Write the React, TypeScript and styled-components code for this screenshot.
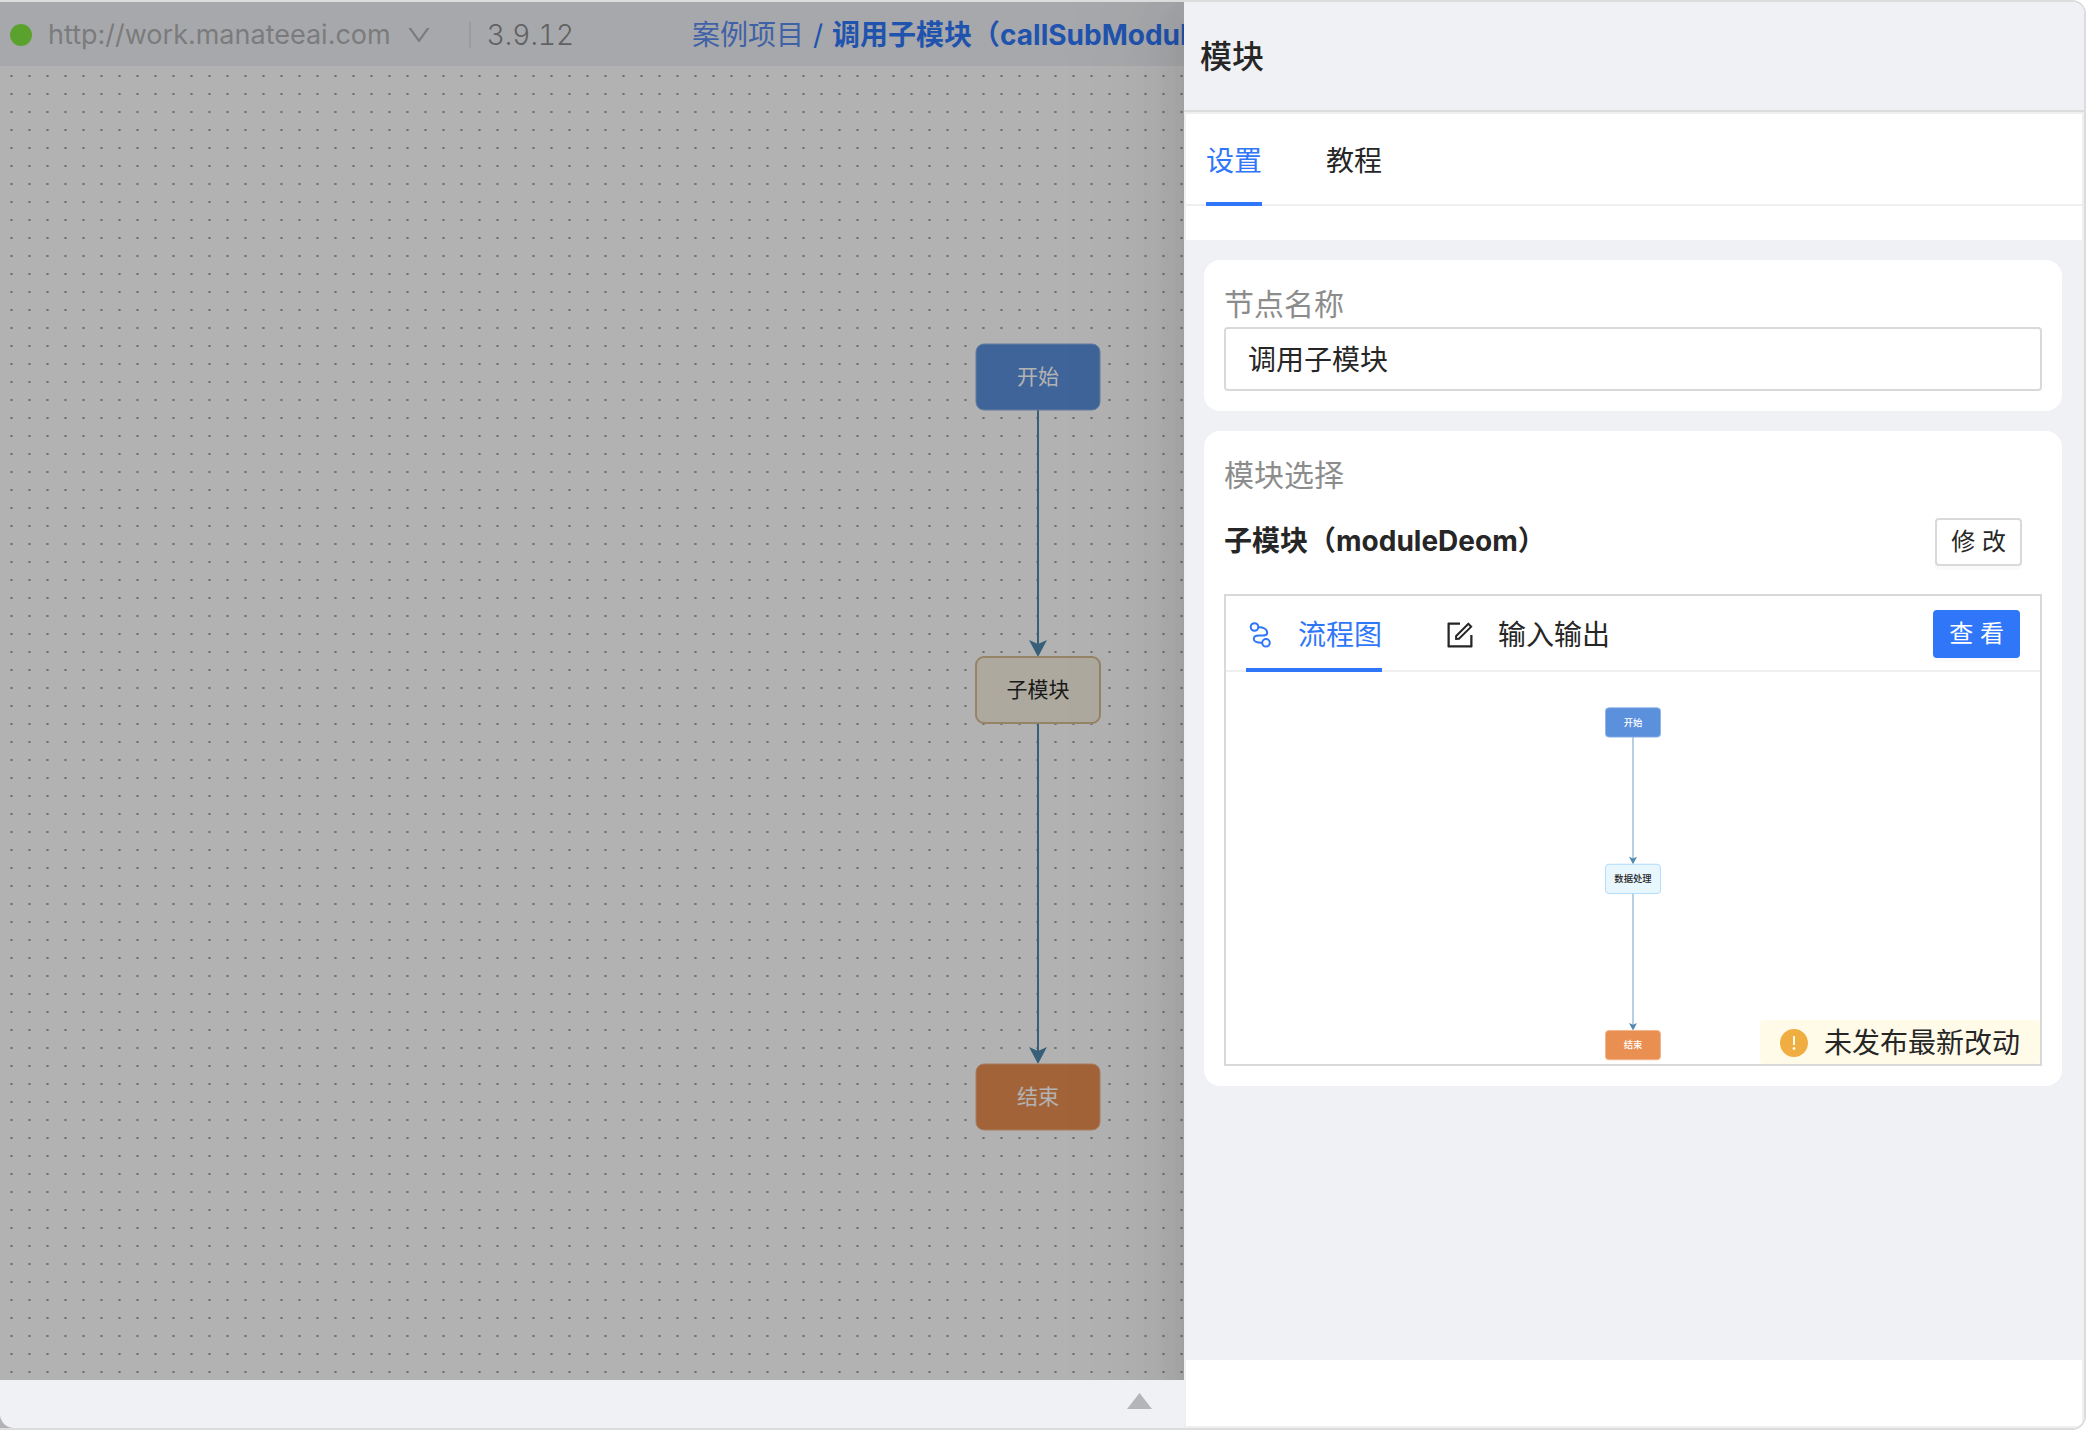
import React, { useState } from "react";
import styled, { createGlobalStyle } from "styled-components";
import {
  AiFillExclamationCircle,
  AiOutlineDown,
  AiOutlineForm,
} from "react-icons/ai";

const color = {
  primary: "#2f77f8",
  text: "#262626",
  muted: "#8c8c8c",
  surface: "#f0f1f5",
  border: "#d9d9d9",
  divider: "#efefef",
  frame: "#dcdcdc",
};

const GlobalStyle = createGlobalStyle`
  *, *::before, *::after { box-sizing: border-box; }
  body {
    margin: 0;
    background: #fff;
    color: ${color.text};
    font-family: Inter, "Noto Sans CJK SC", sans-serif;
    font-size: 28px;
    line-height: 44px;
  }
  button, input { font: inherit; color: inherit; }
`;

const Page = styled.div`
  display: flex;
  min-height: 100vh;
  padding: 0 14px 4px 0;
`;

const Frame = styled.div`
  flex: 1;
  display: flex;
  min-width: 0;
  overflow: hidden;
  border: 2px solid ${color.frame};
  border-left: 0;
  border-radius: 0 14px 14px 0;
`;

const Workspace = styled.main`
  flex: 1;
  min-width: 0;
  display: flex;
  flex-direction: column;
  background: #b2b2b2;
`;

const Stage = styled.div`
  position: relative;
  flex: 1;
  display: flex;
  flex-direction: column;
`;

const Mask = styled.div`
  position: absolute;
  inset: 0;
  background: rgba(0, 0, 0, 0.3);
`;

const TopBar = styled.header`
  display: flex;
  align-items: center;
  height: 64px;
  padding: 2px 0 0 10px;
  background: ${color.surface};
  white-space: nowrap;
`;

const ServerInfo = styled.div`
  display: flex;
  align-items: center;
  flex: 0 0 682px;
`;

const StatusDot = styled.span`
  width: 22px;
  height: 22px;
  margin-right: 16px;
  border-radius: 50%;
  background: #82e743;
`;

const ServerButton = styled.button`
  display: flex;
  align-items: center;
  gap: 14px;
  padding: 0;
  border: 0;
  background: none;
  color: #b0b1b3;
  font-size: 27px;

  svg {
    width: 28px;
    height: 28px;
  }
`;

const Version = styled.span`
  margin-left: 36px;
  padding-left: 16px;
  border-left: 2px solid #dfe0e3;
  line-height: 26px;
  font-weight: 300;
  font-variant-numeric: tabular-nums;
  color: ${color.muted};
`;

const Breadcrumb = styled.nav`
  display: flex;
  flex: 1;
  gap: 9px;
  min-width: 0;
  overflow: hidden;
  color: ${color.primary};

  a {
    color: #5b8def;
    text-decoration: none;
  }
`;

const Canvas = styled.div`
  position: relative;
  flex: 1;
  background-color: #fff;
  background-image:
    conic-gradient(from 270deg at 1px 2px, #a0a0a0 25%, transparent 0),
    conic-gradient(from 270deg at 3px 2px, #c8c8c8 25%, transparent 0);
  background-size: 18px 18px;
  background-position: 11px 9px, 10px 9px;
`;

const CanvasFlow = styled.div`
  position: absolute;
  top: 276px;
  left: 975px;
`;

const BottomBar = styled.footer`
  position: relative;
  z-index: 1;
  display: flex;
  justify-content: flex-end;
  align-items: center;
  height: 48px;
  padding-right: 32px;
  border-bottom-left-radius: 14px;
  background: ${color.surface};
`;

const ExpandButton = styled.button`
  display: flex;
  padding: 0 0 6px;
  border: 0;
  background: none;
`;

const Drawer = styled.aside`
  position: relative;
  flex: 0 0 900px;
  display: flex;
  flex-direction: column;
  background: #fff;
  box-shadow:
    -12px 0 32px -16px rgba(0, 0, 0, 0.08),
    -18px 0 56px rgba(0, 0, 0, 0.05),
    -24px 0 96px 32px rgba(0, 0, 0, 0.03);
`;

const DrawerHeader = styled.header`
  display: flex;
  align-items: center;
  height: 110px;
  padding: 2px 16px 0;
  border-bottom: 2px solid ${color.frame};
  background: ${color.surface};
`;

const DrawerTitle = styled.h2`
  margin: 0;
  font-size: 32px;
  font-weight: 500;
`;

const DrawerBody = styled.div`
  flex: 1;
  display: flex;
  flex-direction: column;
  border: 2px solid ${color.divider};
`;

const TabBar = styled.div<{ $height: number }>`
  display: flex;
  gap: 64px;
  height: ${(p) => p.$height}px;
  padding: 0 20px;
  border-bottom: 2px solid ${color.divider};
`;

const Tab = styled.button<{ $active: boolean }>`
  display: flex;
  align-items: center;
  gap: 22px;
  margin-bottom: -2px;
  padding: 6px 0 0;
  border: 0;
  border-bottom: 4px solid ${(p) => (p.$active ? color.primary : "transparent")};
  background: none;
  color: ${(p) => (p.$active ? color.primary : color.text)};

  svg {
    width: 32px;
    height: 32px;
    margin-left: -2px;
  }
`;

const Settings = styled.div`
  flex: 1;
  display: flex;
  flex-direction: column;
  gap: 20px;
  margin-top: 34px;
  padding: 20px 20px 20px 18px;
  background: ${color.surface};
`;

const DrawerFooter = styled.div`
  height: 66px;
`;

const Card = styled.section`
  padding: 22px 20px 20px;
  border-radius: 16px;
  background: #fff;
`;

const FieldLabel = styled.label`
  display: block;
  font-size: 30px;
  line-height: 45px;
  color: ${color.muted};
`;

const CardLabel = styled.div`
  font-size: 30px;
  line-height: 45px;
  color: ${color.muted};
`;

const TextInput = styled.input`
  display: block;
  width: 100%;
  height: 64px;
  padding: 0 22px 2px;
  border: 2px solid ${color.border};
  border-radius: 4px;
  background: #fff;
  outline: none;
`;

const ModuleRow = styled.div`
  display: flex;
  justify-content: space-between;
  margin: 20px 20px 28px 0;
`;

const ModuleName = styled.h3`
  margin: 0;
  font-size: 28px;
  font-weight: 700;
  line-height: 46px;
`;

const Button = styled.button<{ $primary?: boolean }>`
  height: 48px;
  padding: 0 14px;
  border: 2px solid ${(p) => (p.$primary ? color.primary : color.border)};
  border-radius: 4px;
  background: ${(p) => (p.$primary ? color.primary : "#fff")};
  color: ${(p) => (p.$primary ? "#fff" : color.text)};
  font-size: 24px;
  line-height: 40px;
  box-shadow: 0 4px 0 rgba(0, 0, 0, 0.02);
`;

const Preview = styled.div`
  position: relative;
  border: 2px solid ${color.border};
`;

const PreviewActions = styled.div`
  display: flex;
  align-items: center;
  margin-left: auto;
  padding-top: 2px;
`;

const PreviewFlow = styled.div`
  display: flex;
  justify-content: center;
  height: 392px;
  padding-top: 34px;
`;

const Notice = styled.div`
  position: absolute;
  right: 0;
  bottom: 0;
  display: flex;
  align-items: center;
  gap: 14px;
  padding: 2px 20px 0 18px;
  border-radius: 4px;
  background: #fffbe8;
  line-height: 42px;

  svg {
    width: 32px;
    height: 32px;
    color: #f0ad41;
  }
`;

const FlowDrawing = styled.svg`
  display: block;
  flex: none;
`;

const FlowLabel = styled.text`
  font-size: 21px;
  text-anchor: middle;
  dominant-baseline: central;
`;

type Kind = "start" | "module" | "data" | "end";

interface FlowNode {
  kind: Kind;
  label: string;
  y: number;
}

const nodeStyle: Record<Kind, { fill: string; stroke: string; text: string }> = {
  start: { fill: "#5b90dc", stroke: "#8fb3e6", text: "#fff" },
  module: { fill: "#faf3e2", stroke: "#d6bd93", text: color.text },
  data: { fill: "#e8f6fe", stroke: "#a9d5fa", text: color.text },
  end: { fill: "#ea8f52", stroke: "#f0b48d", text: "#fff" },
};

const NODE_HEIGHT = 66;

function Flow({
  nodes,
  width,
  height,
  extent,
  edge,
  bold,
}: {
  nodes: FlowNode[];
  width: number;
  height: number;
  extent: number;
  edge: string;
  bold?: boolean;
}) {
  return (
    <FlowDrawing
      width={width}
      height={height}
      viewBox={`0 0 126 ${extent}`}
      role="img"
      aria-label={nodes.map((n) => n.label).join(" → ")}
    >
      {nodes.slice(1).map((node, i) => {
        const from = nodes[i].y + NODE_HEIGHT;
        const tip = node.y;
        return (
          <g key={node.label}>
            <path d={`M63 ${from}V${tip - 12}`} stroke={edge} strokeWidth={bold ? 4 : 2} />
            <path
              d={`M63 ${tip}L54 ${tip - 17}L63 ${tip - 13}L72 ${tip - 17}Z`}
              fill="#5089ae"
            />
          </g>
        );
      })}
      {nodes.map((node) => {
        const s = nodeStyle[node.kind];
        return (
          <g key={node.label}>
            <rect
              x={1}
              y={node.y}
              width={124}
              height={NODE_HEIGHT}
              rx={8}
              fill={s.fill}
              stroke={s.stroke}
              strokeWidth={node.kind === "module" || bold ? 2 : 1}
            />
            <FlowLabel
              x={63}
              y={node.y + NODE_HEIGHT / 2 - 1}
              fill={s.text}
              fontWeight={bold ? 500 : 400}
            >
              {node.label}
            </FlowLabel>
          </g>
        );
      })}
    </FlowDrawing>
  );
}

function RouteIcon() {
  return (
    <svg viewBox="-2 -2 32 32" fill="none" stroke="currentColor" strokeWidth={2} aria-hidden="true">
      <circle cx="8.5" cy="6" r="3.8" />
      <circle cx="20" cy="21.8" r="3.8" />
      <path d="M12.3 6.2C17 5.8 21.2 8.2 21.2 11.8C21.2 13.8 19.6 14.6 17.4 14.6H13C9.6 14.6 7.8 15.8 7.8 18C7.8 20.6 11 22 16.2 21.8" />
    </svg>
  );
}

const projectFlow: FlowNode[] = [
  { kind: "start", label: "开始", y: 2 },
  { kind: "module", label: "子模块", y: 315 },
  { kind: "end", label: "结束", y: 722 },
];

const moduleFlow: FlowNode[] = [
  { kind: "start", label: "开始", y: 4 },
  { kind: "data", label: "数据处理", y: 356 },
  { kind: "end", label: "结束", y: 730 },
];

export default function App() {
  const [name, setName] = useState("调用子模块");
  const [tab, setTab] = useState("settings");
  const [view, setView] = useState("flow");

  return (
    <>
      <GlobalStyle />
      <Page>
        <Frame>
          <Workspace>
            <Stage>
              <TopBar>
                <ServerInfo>
                  <StatusDot />
                  <ServerButton type="button">
                    http://work.manateeai.com
                    <AiOutlineDown aria-hidden="true" />
                  </ServerButton>
                  <Version>3.9.12</Version>
                </ServerInfo>
                <Breadcrumb>
                  <a href="#project">案例项目</a>
                  <span>/</span>
                  <b>调用子模块（callSubModule）</b>
                </Breadcrumb>
              </TopBar>
              <Canvas>
                <CanvasFlow>
                  <Flow nodes={projectFlow} width={126} height={790} extent={790} edge="#5089ae" />
                </CanvasFlow>
              </Canvas>
              <Mask />
            </Stage>
            <BottomBar>
              <ExpandButton type="button" aria-label="展开">
                <svg width="25" height="16" viewBox="0 0 25 16" aria-hidden="true">
                  <path d="M12.5 0L25 16H0Z" fill="#b4b5b9" />
                </svg>
              </ExpandButton>
            </BottomBar>
          </Workspace>

          <Drawer>
            <DrawerHeader>
              <DrawerTitle>模块</DrawerTitle>
            </DrawerHeader>
            <DrawerBody>
              <TabBar role="tablist" $height={92}>
                <Tab
                  type="button"
                  role="tab"
                  aria-selected={tab === "settings"}
                  $active={tab === "settings"}
                  onClick={() => setTab("settings")}
                >
                  设置
                </Tab>
                <Tab
                  type="button"
                  role="tab"
                  aria-selected={tab === "guide"}
                  $active={tab === "guide"}
                  onClick={() => setTab("guide")}
                >
                  教程
                </Tab>
              </TabBar>
              <Settings>
                <Card>
                  <FieldLabel htmlFor="node-name">节点名称</FieldLabel>
                  <TextInput
                    id="node-name"
                    type="text"
                    value={name}
                    onChange={(e) => setName(e.target.value)}
                  />
                </Card>
                <Card>
                  <CardLabel>模块选择</CardLabel>
                  <ModuleRow>
                    <ModuleName>子模块（moduleDeom）</ModuleName>
                    <Button type="button">修 改</Button>
                  </ModuleRow>
                  <Preview>
                    <TabBar role="tablist" $height={76}>
                      <Tab
                        type="button"
                        role="tab"
                        aria-selected={view === "flow"}
                        $active={view === "flow"}
                        onClick={() => setView("flow")}
                      >
                        <RouteIcon />
                        流程图
                      </Tab>
                      <Tab
                        type="button"
                        role="tab"
                        aria-selected={view === "io"}
                        $active={view === "io"}
                        onClick={() => setView("io")}
                      >
                        <AiOutlineForm aria-hidden="true" />
                        输入输出
                      </Tab>
                      <PreviewActions>
                        <Button type="button" $primary>
                          查 看
                        </Button>
                      </PreviewActions>
                    </TabBar>
                    <PreviewFlow>
                      <Flow nodes={moduleFlow} width={56} height={356} extent={801} edge="#aecbdc" bold />
                    </PreviewFlow>
                    <Notice>
                      <AiFillExclamationCircle aria-hidden="true" />
                      未发布最新改动
                    </Notice>
                  </Preview>
                </Card>
              </Settings>
              <DrawerFooter />
            </DrawerBody>
          </Drawer>
        </Frame>
      </Page>
    </>
  );
}
